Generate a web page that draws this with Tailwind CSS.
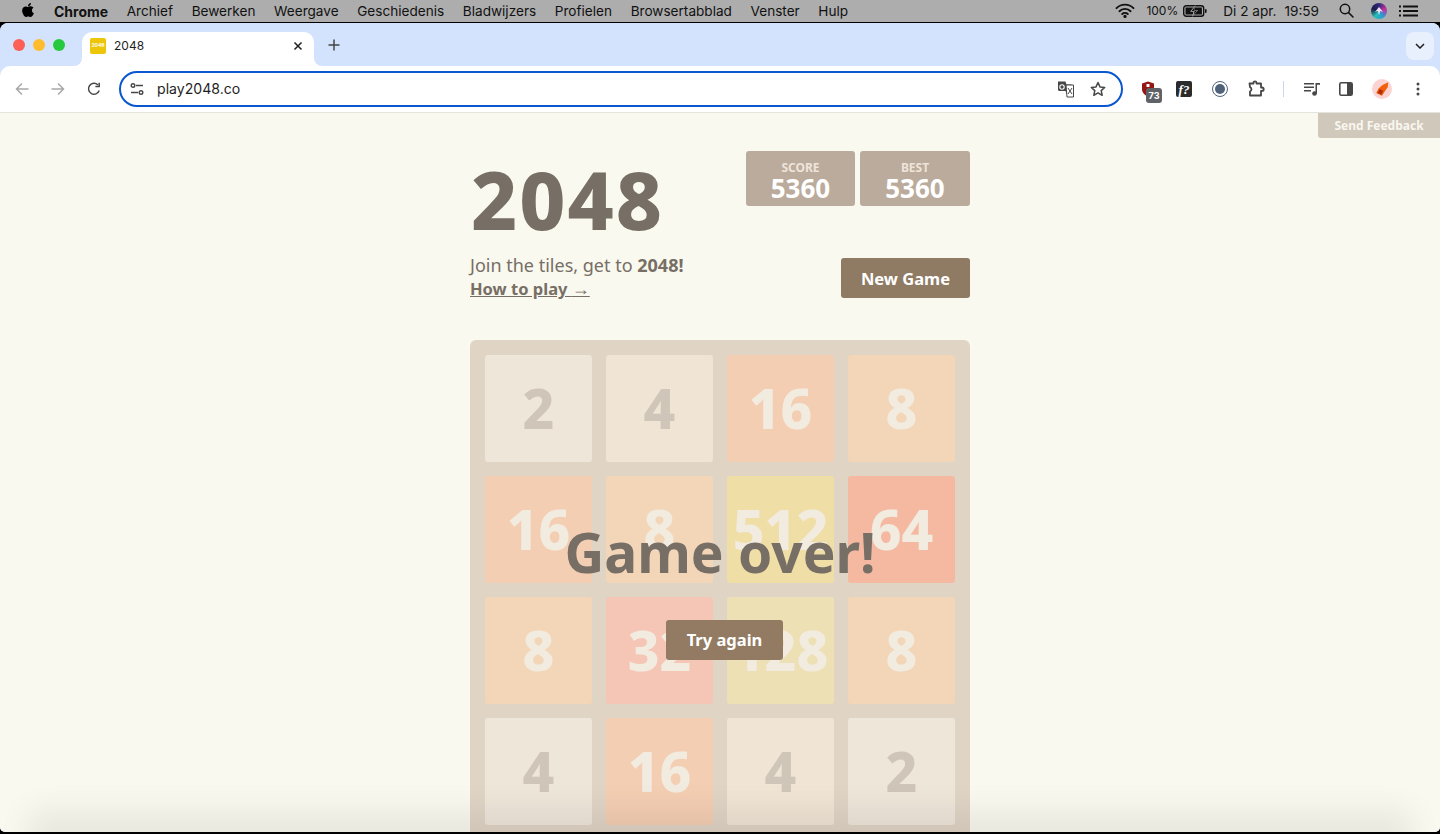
<!DOCTYPE html>
<html lang="nl">
<head>
    <meta charset="UTF-8">
    <meta name="viewport" content="width=device-width, initial-scale=1.0">
    <title>2048</title>
    <script src="https://cdn.jsdelivr.net/npm/@tailwindcss/browser@4"></script>
</head>
<body class="bg-black overflow-hidden">
<div class="relative w-[1440px] h-[834px] overflow-hidden flex flex-col bg-black font-['Inter',sans-serif]">

    <!-- macOS menu bar -->
    <div class="h-[22px] bg-[#adadad] flex items-center text-[13.6px] text-[#111] shrink-0">
        <svg class="ml-[21px] w-[14px] h-[16px] mb-[2px]" viewBox="0 0 384 512" fill="#000"><path d="M318.7 268.7c-.2-36.7 16.4-64.4 50-84.8-18.8-26.9-47.2-41.7-84.7-44.6-35.5-2.8-74.3 20.7-88.5 20.7-15 0-49.4-19.7-76.4-19.7C63.3 141.2 4 184.8 4 273.5q0 39.3 14.4 81.2c12.8 36.7 59 126.7 107.2 125.2 25.2-.6 43-17.9 75.8-17.9 31.8 0 48.3 17.9 76.4 17.9 48.6-.7 90.4-82.5 102.6-119.3-65.2-30.7-61.7-90-61.7-91.9zm-56.6-164.2c27.3-32.4 24.8-61.9 24-72.5-24.1 1.4-52 16.4-67.9 34.9-17.5 19.8-27.8 44.3-25.6 71.9 26.1 2 49.9-11.4 69.5-34.3z"/></svg>
        <div class="ml-[19px] flex gap-[18.6px] whitespace-nowrap">
            <span class="font-bold text-[14px]">Chrome</span>
            <span>Archief</span>
            <span>Bewerken</span>
            <span>Weergave</span>
            <span>Geschiedenis</span>
            <span>Bladwijzers</span>
            <span>Profielen</span>
            <span>Browsertabblad</span>
            <span>Venster</span>
            <span>Hulp</span>
        </div>
        <div class="ml-auto flex items-center whitespace-nowrap pr-[22px]">
            <svg class="w-[20px] h-[15px]" viewBox="0 0 20 15" fill="none" stroke="#111" stroke-width="1.9" stroke-linecap="round"><path d="M1.5 5.2a12 12 0 0 1 17 0"/><path d="M4.4 8.2a8 8 0 0 1 11.2 0"/><path d="M7.2 11a4 4 0 0 1 5.6 0"/><circle cx="10" cy="13.4" r=".7" fill="#111"/></svg>
            <span class="ml-[11px] text-[12px]">100%</span>
            <svg class="ml-[5px] w-[24px] h-[12px]" viewBox="0 0 24 12"><rect x=".7" y=".7" width="20" height="10.6" rx="2.5" fill="none" stroke="#111" stroke-width="1.4"/><rect x="22" y="4" width="1.6" height="4" rx=".8" fill="#111"/><rect x="2.5" y="2.5" width="16.4" height="7" fill="#111"/><path d="M12.5 0 7 6.8h3.4L9 12l6-7h-3.6z" fill="#adadad"/><path d="M12 1.8 8.6 6h3l-1 3.8L14 5.6h-3z" fill="#111"/></svg>
            <span class="ml-[16px]">Di 2 apr.</span>
            <span class="ml-[8px]">19:59</span>
            <svg class="ml-[20px] w-[15px] h-[15px]" viewBox="0 0 15 15" fill="none" stroke="#111" stroke-width="1.5" stroke-linecap="round"><circle cx="6" cy="6" r="4.7"/><path d="m9.6 9.6 4.4 4.4"/></svg>
            <div class="ml-[17px] w-[16px] h-[16px] rounded-full bg-[conic-gradient(#2f2a7a,#c22f9d,#2a9bd8,#26c0b0,#1b1b4a,#2f2a7a)] flex items-center justify-center">
                <svg class="w-[10px] h-[10px]" viewBox="0 0 10 10" fill="#e8e8f5"><path d="M5 1 9 6 6.2 5 5 9 3.8 5 1 6z"/></svg>
            </div>
            <svg class="ml-[12px] w-[19px] h-[12px]" viewBox="0 0 19 12" fill="#111"><rect x="0" y="0.5" width="2" height="2"/><rect x="0" y="5" width="2" height="2"/><rect x="0" y="9.5" width="2" height="2"/><rect x="4" y="0.5" width="15" height="2"/><rect x="4" y="5" width="15" height="2"/><rect x="4" y="9.5" width="15" height="2"/></svg>
        </div>
    </div>
    <div class="h-[1px] bg-black shrink-0"></div>

    <!-- browser window -->
    <div class="flex-1 flex flex-col rounded-t-[8px] rounded-b-[5px] overflow-hidden bg-[#d3e3fd] min-h-0">
        <!-- tab strip -->
        <div class="h-[43px] flex items-end relative shrink-0 bg-[#d3e3fd]">
            <div class="absolute left-[13px] top-[16px] flex gap-[8px]">
                <span class="w-[12px] h-[12px] rounded-full bg-[#fe5f57]"></span>
                <span class="w-[12px] h-[12px] rounded-full bg-[#febc2e]"></span>
                <span class="w-[12px] h-[12px] rounded-full bg-[#27c93f]"></span>
            </div>
            <div class="relative ml-[82px] w-[232px] h-[34px] bg-white rounded-t-[10px] flex items-center pb-[6px]">
                <svg class="absolute left-[-8px] bottom-0 w-[8px] h-[8px]" viewBox="0 0 8 8" fill="#fff"><path d="M8 0v8H0a8 8 0 0 0 8-8z"/></svg>
                <svg class="absolute right-[-8px] bottom-0 w-[8px] h-[8px]" viewBox="0 0 8 8" fill="#fff"><path d="M0 0v8h8a8 8 0 0 1-8-8z"/></svg>
                <div class="ml-[8px] w-[16px] h-[16px] rounded-[2px] bg-[#edc60a] flex items-center justify-center text-[5px] font-bold text-white">2048</div>
                <span class="ml-[8px] text-[12px] text-[#1f1f1f]">2048</span>
                <svg class="ml-auto mr-[11px] w-[10px] h-[10px]" viewBox="0 0 10 10" stroke="#1f1f1f" stroke-width="1.5"><path d="m1.5 1.5 7 7M8.5 1.5l-7 7"/></svg>
            </div>
            <svg class="ml-[14px] mb-[15px] w-[12px] h-[12px]" viewBox="0 0 12 12" stroke="#444746" stroke-width="1.5"><path d="M6 .5v11M.5 6h11"/></svg>
            <div class="ml-auto mr-[6px] mb-[6px] w-[28px] h-[28px] rounded-[8px] bg-[#e8f0fe] flex items-center justify-center">
                <svg class="w-[10px] h-[6px]" viewBox="0 0 10 6" fill="none" stroke="#1f1f1f" stroke-width="1.5"><path d="m1 1 4 4 4-4"/></svg>
            </div>
        </div>

        <!-- toolbar -->
        <div class="h-[46px] bg-white rounded-t-[10px] flex items-center shrink-0">
            <div class="ml-[4px] w-[36px] flex justify-center">
                <svg class="w-[14px] h-[14px]" viewBox="0 0 14 14" fill="none" stroke="#a8a8a8" stroke-width="1.5"><path d="M13.5 7H1.5M7 1.5 1.5 7 7 12.5"/></svg>
            </div>
            <div class="w-[36px] flex justify-center">
                <svg class="w-[14px] h-[14px]" viewBox="0 0 14 14" fill="none" stroke="#a8a8a8" stroke-width="1.5"><path d="M.5 7h12M7 1.5 12.5 7 7 12.5"/></svg>
            </div>
            <div class="w-[36px] flex justify-center">
                <svg class="w-[14px] h-[14px]" viewBox="0 0 14 14" fill="none" stroke="#474747" stroke-width="1.5"><path d="M12.2 8.6A5.5 5.5 0 1 1 11 3"/><path d="M12.2.8v3.8H8.4" fill="none"/></svg>
            </div>
            <div class="ml-[7px] w-[1004px] h-[36px] rounded-full border-2 border-[#0b57d0] flex items-center">
                <svg class="ml-[9px] w-[14px] h-[14px]" viewBox="0 0 14 14" fill="none" stroke="#474747" stroke-width="1.4"><path d="M6 3.5h7M1 10.5h7"/><circle cx="3" cy="3.5" r="1.8"/><circle cx="11" cy="10.5" r="1.8"/></svg>
                <span class="ml-[13px] text-[14.1px] text-[#1f1f1f]">play2048.co</span>
                <svg class="ml-auto w-[18px] h-[18px]" viewBox="0 0 18 18"><path d="M1 1.5h7.5l1 3H14a1.5 1.5 0 0 1 1.5 1.5v8h-6l-1-3H2.500A1.500 1.500 0 0 1 1 9.500z" fill="#474747"/><path d="M9 5h7.500v12H10z" fill="#fff" stroke="#474747"/><circle cx="5" cy="7" r="2.200" fill="none" stroke="#fff" stroke-width="1.100"/><path d="m11 8 4 6M15 8l-4 6" stroke="#474747"/></svg>
                <svg class="ml-[15px] mr-[15px] w-[16px] h-[16px]" viewBox="0 0 16 16" fill="none" stroke="#474747" stroke-width="1.500" stroke-linejoin="round"><path d="m8 1.500 2 4.400 4.700.5-3.500 3.200 1 4.700L8 11.900l-4.200 2.400 1-4.700L1.300 6.400 6 5.900z"/></svg>
            </div>
            <div class="ml-[7px] w-[36px] flex justify-center relative">
                <svg class="w-[14px] h-[16px]" viewBox="0 0 14 16"><path d="M7 .5 13 2.500V8c0 3.500-2.500 6-6 7.500C3.500 14 1 11.500 1 8V2.500z" fill="#951515"/><rect x="5.500" y="3" width="3" height="3" fill="#fff"/></svg>
                <span class="absolute left-[16px] top-[7px] w-[16px] h-[15px] rounded-[3px] bg-[#5f6368] text-white text-[9px] font-bold flex items-center justify-center leading-none">73</span>
            </div>
            <div class="w-[36px] flex justify-center">
                <div class="w-[16px] h-[16px] rounded-[2px] bg-[#2b2b2b] text-white text-[13px] italic font-['Liberation_Serif',serif] font-bold flex items-center justify-center leading-none">f?</div>
            </div>
            <div class="w-[36px] flex justify-center">
                <div class="w-[16px] h-[16px] rounded-full border-[1.5px] border-[#50627a] flex items-center justify-center">
                    <div class="w-[10px] h-[10px] rounded-full bg-[#50627a]"></div>
                </div>
            </div>
            <div class="w-[36px] flex justify-center">
                <svg class="w-[18px] h-[18px]" viewBox="0 0 18 18" fill="none" stroke="#474747" stroke-width="1.800" stroke-linejoin="round"><path d="M2.500 3.500H6.500V2.800a1.500 1.500 0 0 1 3 0v.7h4.500V7.500H15a1.700 1.700 0 0 1 0 3.400h-1V15.500H3V11.500a2.300 2.300 0 0 0 0-4.300z"/></svg>
            </div>
            <div class="w-[18px] flex justify-center">
                <div class="w-[1px] h-[16px] bg-[#c7d7f0]"></div>
            </div>
            <div class="w-[36px] flex justify-center">
                <svg class="ml-[3px] w-[16px] h-[14px]" viewBox="0 0 16 14" fill="#474747"><rect y="1" width="10" height="1.500"/><rect y="4.500" width="10" height="1.500"/><rect y="8" width="7" height="1.500"/><circle cx="10.500" cy="11.500" r="2.300"/><path d="M11.500 11.500V1H16v1.800h-3v8.700z"/></svg>
            </div>
            <div class="w-[36px] flex justify-center">
                <svg class="w-[14px] h-[14px]" viewBox="0 0 14 14"><rect x=".8" y=".8" width="12.400" height="12.400" rx="1.500" fill="#fff" stroke="#474747" stroke-width="1.600"/><rect x="8" y="1" width="5" height="12" fill="#474747"/></svg>
            </div>
            <div class="w-[36px] flex justify-center">
                <div class="w-[20px] h-[20px] rounded-full bg-[#fbd3d3] flex items-center justify-center">
                    <svg class="w-[16px] h-[16px]" viewBox="0 0 14 14"><path d="M12.500 1 12 5.500 9.500 9 7 13 2 10.500 4 6.500 7.500 3.500z" fill="#f2600c"/><path d="M5 7l3 1.500L6.500 12 3 10.500z" fill="#b5300a"/></svg>
                </div>
            </div>
            <div class="w-[36px] flex justify-center">
                <svg class="w-[4px] h-[14px]" viewBox="0 0 4 14" fill="#474747"><circle cx="2" cy="2" r="1.500"/><circle cx="2" cy="7" r="1.500"/><circle cx="2" cy="12" r="1.500"/></svg>
            </div>
        </div>
        <div class="h-[1px] bg-[#e3e5dc] shrink-0"></div>

        <!-- page -->
        <div class="relative flex-1 min-h-0 bg-[#f9f9ef] overflow-hidden font-['Noto_Sans',sans-serif] text-[#776e65]">
            <div class="absolute right-0 top-0 w-[122px] h-[25px] bg-[#d0c8ba] rounded-bl-[3px] text-[#f9f6f0] text-[12px] font-bold flex items-center justify-center">Send Feedback</div>

            <div class="w-[500px] mx-auto pt-[38px]">
                <div class="flex justify-between items-start h-[107px]">
                    <h1 class="text-[80px] font-extrabold leading-none ml-[1px] mt-[8px] tracking-[2px]">2048</h1>
                    <div class="flex gap-[5px]">
                        <div class="w-[109px] h-[55px] bg-[#bbab9c] rounded-[3px] flex flex-col items-center pt-[10px]">
                            <span class="text-[12px] font-bold leading-[14px] text-[#eee4da]">SCORE</span>
                            <span class="text-[26px] font-bold leading-[27px] text-white">5360</span>
                        </div>
                        <div class="w-[110px] h-[55px] bg-[#bbab9c] rounded-[3px] flex flex-col items-center pt-[10px]">
                            <span class="text-[12px] font-bold leading-[14px] text-[#eee4da]">BEST</span>
                            <span class="text-[26px] font-bold leading-[27px] text-white">5360</span>
                        </div>
                    </div>
                </div>
                <div class="flex justify-between items-start">
                    <p class="text-[18px] leading-[23px] -mt-[4px]">Join the tiles, get to <strong>2048!</strong><br><a class="font-bold underline text-[16.5px]">How to play <span class="font-['Liberation_Sans',sans-serif] font-normal text-[18px]">→</span></a></p>
                    <button class="w-[129px] h-[40px] bg-[#8f7a63] rounded-[3px] text-white text-[16.5px] font-bold pt-[2px]">New Game</button>
                </div>

                <!-- board -->
                <div class="relative mt-[39px] w-[500px] h-[500px] bg-[#e0d4c5] rounded-[6px] p-[15px] grid grid-cols-4 grid-rows-4 gap-[14px] text-[55px] font-extrabold">
                    <div class="rounded-[3px] flex items-center justify-center bg-[#efe6da] text-[#d0c5b9]">2</div>
                    <div class="rounded-[3px] flex items-center justify-center bg-[#f0e4d4] text-[#d0c5b9]">4</div>
                    <div class="rounded-[3px] flex items-center justify-center bg-[#f4ceb3] text-[#f2ebe0]">16</div>
                    <div class="rounded-[3px] flex items-center justify-center bg-[#f3d6b8] text-[#f2ebe0]">8</div>
                    <div class="rounded-[3px] flex items-center justify-center bg-[#f4ceb3] text-[#f2ebe0]">16</div>
                    <div class="rounded-[3px] flex items-center justify-center bg-[#f3d6b8] text-[#f2ebe0]">8</div>
                    <div class="rounded-[3px] flex items-center justify-center bg-[#f0dea7] text-[#f2ebe0]">512</div>
                    <div class="rounded-[3px] flex items-center justify-center bg-[#f4b9a0] text-[#f2ebe0]">64</div>
                    <div class="rounded-[3px] flex items-center justify-center bg-[#f3d6b8] text-[#f2ebe0]">8</div>
                    <div class="rounded-[3px] flex items-center justify-center bg-[#f5c6b5] text-[#f2ebe0]">32</div>
                    <div class="rounded-[3px] flex items-center justify-center bg-[#eee0b5] text-[#f2ebe0]">128</div>
                    <div class="rounded-[3px] flex items-center justify-center bg-[#f3d6b8] text-[#f2ebe0]">8</div>
                    <div class="rounded-[3px] flex items-center justify-center bg-[#efe6da] text-[#d0c5b9]">4</div>
                    <div class="rounded-[3px] flex items-center justify-center bg-[#f4ceb3] text-[#f2ebe0]">16</div>
                    <div class="rounded-[3px] flex items-center justify-center bg-[#f0e4d4] text-[#d0c5b9]">4</div>
                    <div class="rounded-[3px] flex items-center justify-center bg-[#efe6da] text-[#d0c5b9]">2</div>

                    <!-- game over overlay -->
                    <div class="absolute inset-0 flex flex-col items-center">
                        <div class="mt-[169px] text-[55px] leading-[85px] font-bold text-[#776e65]">Game over!</div>
                        <button class="mt-[26px] ml-[9px] w-[117px] h-[40px] bg-[#927b62] rounded-[3px] text-white text-[16.5px] font-bold">Try again</button>
                    </div>
                </div>
            </div>

            <!-- shadow of the dock along the bottom edge -->
            <div class="absolute left-[50px] right-[50px] bottom-[-12px] h-[12px] shadow-[0_0_32px_22px_rgba(0,0,0,0.07)]"></div>
        </div>
    </div>
    <div class="h-[2px] bg-black shrink-0"></div>
</div>
</body>
</html>
